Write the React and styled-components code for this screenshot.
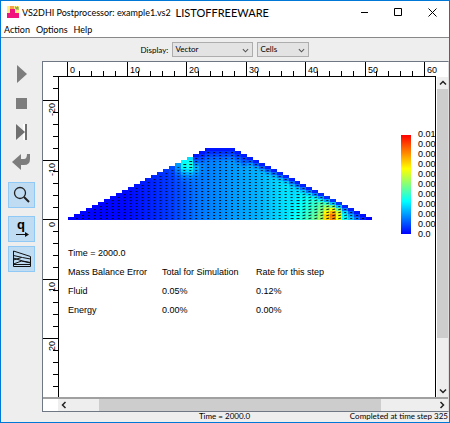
import React from 'react';
import styled, { createGlobalStyle } from 'styled-components';

const GlobalStyle = createGlobalStyle`
    * {
        box-sizing: border-box;
    }
    body {
        margin: 0;
        font-family: Lato, "Open Sans", sans-serif;
        font-size: 9px;
        color: #000;
    }
    button, select {
        font: inherit;
        color: inherit;
    }
`;

const Window = styled.div`
    display: flex;
    flex-direction: column;
    min-height: 100vh;
    border: 1px solid #0078d7;
    background: #eee;
`;

const TitleBar = styled.header`
    display: flex;
    align-items: center;
    height: 22px;
    padding-left: 5px;
    background: #fff;
`;

const Title = styled.h1`
    margin: 0 0 0 2px;
    font-size: 9px;
    font-weight: 400;
    white-space: nowrap;
`;

const Watermark = styled.span`
    margin-left: 5px;
    font-size: 11px;
`;

const WindowButtons = styled.div`
    display: flex;
    margin-left: auto;
`;

const WindowButton = styled.button`
    display: flex;
    align-items: center;
    justify-content: center;
    width: 34px;
    height: 20px;
    padding: 0;
    border: 0;
    background: none;
`;

const MenuBar = styled.nav`
    display: flex;
    gap: 6px;
    height: 15px;
    padding-left: 3px;
    background: #fff;
    border-bottom: 1px solid #888;
`;

const MenuButton = styled.button`
    padding: 0;
    border: 0;
    background: none;
    line-height: 14px;
`;

const Toolbar = styled.div`
    display: flex;
    align-items: center;
    justify-content: center;
    gap: 4px;
    height: 23px;
    font-size: 8px;
`;

const Field = styled.div`
    position: relative;
    width: ${props => props.$width}px;
    svg {
        position: absolute;
        right: 4px;
        top: 5px;
        pointer-events: none;
    }
`;

const Select = styled.select`
    display: block;
    width: 100%;
    height: 15px;
    padding: 0 2px;
    border: 1px solid #adadad;
    border-radius: 0;
    background: #e3e3e3;
    appearance: none;
    line-height: 13px;
`;

const Body = styled.div`
    display: flex;
    flex: 1;
`;

const Sidebar = styled.aside`
    width: 41px;
    display: flex;
    flex-direction: column;
    align-items: center;
    gap: 8px;
`;

const ToolGroup = styled.div`
    display: flex;
    flex-direction: column;
    gap: ${props => props.$gap}px;
`;

const ToolButton = styled.button`
    display: flex;
    align-items: center;
    justify-content: center;
    width: 27px;
    height: 26px;
    padding: 0;
    border: 1px solid ${props => (props.$active ? '#90c8f6' : 'transparent')};
    background: ${props => (props.$active ? '#c0dcf3' : 'none')};
`;

const Viewer = styled.main`
    flex: 1;
    min-width: 0;
    display: grid;
    grid-template-columns: 15px minmax(0, 1fr) 12px;
    grid-template-rows: 14px 1fr 14px;
    border: 1px solid #6f7684;
    border-right-color: #ddd;
    background: #fff;
`;

const TopRuler = styled.svg`
    grid-column: 2 / 4;
    width: 100%;
    height: 14px;
    font: 9px "Liberation Sans", Arial, sans-serif;
`;

const SideRuler = styled.svg`
    grid-column: 1;
    width: 15px;
    height: 100%;
    font: 9px "Liberation Sans", Arial, sans-serif;
`;

const Plot = styled.section`
    border: solid #000;
    border-width: 1px 1px 0;
    padding: 52px 0 0 9px;
    overflow: hidden;
    font: 9px "Liberation Sans", Arial, sans-serif;
`;

const Figure = styled.div`
    display: flex;
    justify-content: space-between;
    align-items: flex-start;
    height: 115px;
`;

const MeshImage = styled.svg`
    width: 304px;
    height: 72px;
    margin-top: 19px;
    flex: none;
`;

const Legend = styled.div`
    display: flex;
    align-items: center;
    gap: 7px;
`;

const ColorBar = styled.div`
    width: 10px;
    height: 99px;
    background: linear-gradient(#f00, #ff0 34%, #0ff 67%, #00f);
`;

const LegendLabels = styled.ul`
    width: 17px;
    margin: 0;
    padding: 0;
    list-style: none;
    line-height: 10px;
`;

const TimeLabel = styled.p`
    margin: 0;
    line-height: 19px;
`;

const BalanceTable = styled.table`
    border-collapse: collapse;
    line-height: 19px;
    th, td {
        min-width: 94px;
        padding: 0;
        font-weight: 400;
        text-align: left;
        white-space: nowrap;
    }
`;

const VerticalScroll = styled.div`
    display: flex;
    flex-direction: column;
    margin: 1px 0 0 1px;
    background: #eee;
`;

const HorizontalScroll = styled.div`
    grid-column: 2 / 4;
    display: flex;
    border-top: 2px solid #a0a0a0;
    background: #eee;
`;

const Corner = styled.div`
    border-top: 2px solid #a0a0a0;
`;

const Thumb = styled.div`
    flex: ${props => props.$size};
    background: #cdcdcd;
`;

const Track = styled.div`
    flex: ${props => props.$size};
`;

const ScrollButton = styled.button`
    display: flex;
    align-items: center;
    justify-content: center;
    flex: none;
    width: 12px;
    height: 12px;
    padding: 0;
    border: 0;
    background: none;
`;

const StatusBar = styled.footer`
    display: grid;
    grid-template-columns: 1fr auto 1fr;
    height: 10px;
    padding-right: 1px;
    font-size: 8px;
    line-height: 9px;
    white-space: nowrap;
    span:first-child {
        grid-column: 2;
    }
    span:last-child {
        text-align: right;
    }
`;

const COLUMNS = 51;
const SCALE = 59.5;

// [column, value] pairs of the velocity along the base of the embankment
const PROFILE = [
    [0, 0], [9, 0.01], [13, 0.04], [17, 0.08], [21, 0.15], [27, 0.2], [32, 0.24],
    [36, 0.3], [39, 0.38], [41, 0.46], [43, 0.57], [44, 0.62], [45, 0.6],
    [46, 0.34], [48, 0.18], [50, 0.02],
];

const rowsIn = col => Math.min(col + 1, 24, COLUMNS - col);

function baseValue(col) {
    const i = Math.max(1, PROFILE.findIndex(p => p[0] >= col));
    const [x0, v0] = PROFILE[i - 1];
    const [x1, v1] = PROFILE[i];
    return v0 + ((v1 - v0) * (col - x0)) / (x1 - x0);
}

function valueAt(col, row) {
    const depth = rowsIn(col) - row - 1;
    const bump = (x, y, r, a) => a * Math.exp(-((col - x) ** 2 + ((row - y) / 2) ** 2) / (r * r));
    let v = baseValue(col);
    if (col > 36) {
        v -= (v - 0.25) * Math.min(1, row / 16);
    }
    v += bump(19.5, 18, 1.6, 0.26) + bump(43.7, 1, 1.1, 0.26);
    if (col > 20) {
        v *= Math.min(1, 0.15 + depth * (col < 30 ? 0.2 : 0.35));
    }
    return Math.max(0, Math.min(1, v));
}

// blue - cyan - yellow - red
function colorOf(value) {
    const t = value * 3;
    const level = n => Math.round(255 * Math.max(0, Math.min(1, n)));
    return `rgb(${level(t - 1)}, ${level(Math.min(t, 3 - t))}, ${level(2 - t)})`;
}

const cells = [];
for (let col = 0; col < COLUMNS; col++) {
    for (let row = 0; row < rowsIn(col); row++) {
        cells.push({ col, row, value: valueAt(col, row) });
    }
}

const Mesh = () => (
    <MeshImage viewBox="0 0 51 12" preserveAspectRatio="none" role="img" aria-label="Vector">
        <g shapeRendering="crispEdges">
            {cells.map(c => (
                <rect
                    key={`${c.col}-${c.row}`}
                    x={c.col}
                    y={11.5 - c.row / 2}
                    width="1"
                    height="0.5"
                    fill={colorOf(c.value)}
                />
            ))}
        </g>
        {cells.filter(c => c.row < rowsIn(c.col) - 1).map(c => (
            <rect
                key={`${c.col}-${c.row}`}
                x={c.col + 0.34}
                y={11.67 - c.row / 2}
                width={c.value > 0.3 ? 0.5 : 0.34}
                height="0.17"
                opacity={c.col < 19 ? 0.7 : 0.85}
                transform={c.col > 38 && c.value > 0.3 ? `rotate(-12 ${c.col + 0.5} ${11.75 - c.row / 2})` : undefined}
            />
        ))}
    </MeshImage>
);

const ticks = (from, to) => {
    const list = [];
    for (let i = from; i <= to; i++) {
        list.push(i);
    }
    return list;
};

const HorizontalRuler = () => (
    <TopRuler>
        {ticks(0, 30).map(i => (
            <rect key={i} x={Math.round(9 + (i * SCALE) / 5)} y={i % 5 ? 9 : 0} width="1" height="14" />
        ))}
        {ticks(0, 6).map(i => (
            <text key={i} x={Math.round(12 + i * SCALE)} y="11">{i * 10}</text>
        ))}
    </TopRuler>
);

const VerticalRuler = () => (
    <SideRuler>
        {ticks(-12, 21).map(i => (
            <rect key={i} x={i % 5 ? 10 : 0} y={Math.round(143 + (i * SCALE) / 5)} width="15" height="1" />
        ))}
        {ticks(-2, 2).map(i => (
            <text
                key={i}
                textAnchor="end"
                transform={`translate(12 ${Math.round(146 + i * SCALE)}) rotate(-90)`}
            >
                {i * 10}
            </text>
        ))}
    </SideRuler>
);

const Chevron = ({ turn = 0, size = 8, weight = 1.5, color = '#222' }) => (
    <svg width={size} height={size} viewBox="0 0 8 8" fill="none" stroke={color} strokeWidth={weight}>
        <path d="M1 2.5 4 5.5 7 2.5" transform={`rotate(${turn} 4 4)`} />
    </svg>
);

const AppIcon = () => (
    <svg width="14" height="14" viewBox="0 0 14 14">
        <path d="M1 1h12v9H1z" fill="#ffee80" />
        <path d="M4 1h4v5H4z" fill="#f6a04c" />
        <path d="M4 4h5v4h4v5H1V8h3z" fill="#f0147c" />
        <path d="M9 2h1v2h1V2h1v3" fill="none" stroke="#7b9a42" />
    </svg>
);

const PlayIcon = () => (
    <svg width="10" height="18" viewBox="0 0 10 18">
        <path d="M0 0 10 9 0 18z" fill="#7d7d7d" />
    </svg>
);

const StopIcon = () => (
    <svg width="11" height="11" viewBox="0 0 11 11">
        <path d="M0 0h11v11H0z" fill="#7d7d7d" />
    </svg>
);

const StepIcon = () => (
    <svg width="12" height="16" viewBox="0 0 12 16">
        <path d="M8 0v16" stroke="#fff" strokeWidth="2" />
        <path d="M0 0 9 8 0 16zM9 0h2v16H9z" fill="#6f6f6f" />
    </svg>
);

const ReturnIcon = () => (
    <svg width="19" height="17" viewBox="0 0 19 17">
        <path d="M0 9 9 1v5h3q3 0 3-5h3v5q0 6-6 6H9v5z" fill="#7d7d7d" />
    </svg>
);

const ZoomIcon = () => (
    <svg width="18" height="18" viewBox="0 0 18 18" fill="none" stroke="#222">
        <circle cx="7" cy="7" r="5.5" strokeWidth="1.3" />
        <path d="m11 11 5 5" strokeWidth="2" />
    </svg>
);

const FluxIcon = () => (
    <svg width="18" height="24" viewBox="0 -2 18 24">
        <text x="4" y="10" fontFamily="Liberation Sans, sans-serif" fontSize="13" fontWeight="700">q</text>
        <path d="M3 15.5h12" stroke="#111" />
        <path d="m12 13 4 2.5-4 2.5z" fill="#111" />
    </svg>
);

const ContourIcon = () => (
    <svg width="20" height="18" viewBox="0 0 20 18" fill="none" stroke="#111">
        <path d="M1.5 1v15.5h17V6.5L1.5 1M1.5 5.5l9 2 8 1.5M1.5 10l8-2.5M1.5 8l9 3 8 1.5M1.5 14l8-3 9 2M1.5 14.5h17" />
    </svg>
);

const legendValues = ['0.01', ...Array(9).fill('0.00'), '0.0'];

export default function App() {
    return (
        <Window>
            <GlobalStyle />
            <TitleBar>
                <AppIcon />
                <Title>VS2DHI Postprocessor: example1.vs2</Title>
                <Watermark>LISTOFFREEWARE</Watermark>
                <WindowButtons>
                    <WindowButton aria-label="Minimize">
                        <svg width="9" height="9"><path d="M1 4.5h7" stroke="#000" /></svg>
                    </WindowButton>
                    <WindowButton aria-label="Maximize">
                        <svg width="9" height="9"><path d="M.5.5h7v7h-7z" fill="none" stroke="#000" /></svg>
                    </WindowButton>
                    <WindowButton aria-label="Close">
                        <svg width="9" height="9"><path d="m.5.5 8 8m0-8-8 8" stroke="#000" /></svg>
                    </WindowButton>
                </WindowButtons>
            </TitleBar>
            <MenuBar>
                <MenuButton>Action</MenuButton>
                <MenuButton>Options</MenuButton>
                <MenuButton>Help</MenuButton>
            </MenuBar>
            <Toolbar>
                <label htmlFor="display">Display:</label>
                <Field $width={81}>
                    <Select id="display"><option>Vector</option></Select>
                    <Chevron size={7} weight={1.2} color="#555" />
                </Field>
                <Field $width={52}>
                    <Select aria-label="Vector placement"><option>Cells</option></Select>
                    <Chevron size={7} weight={1.2} color="#555" />
                </Field>
            </Toolbar>
            <Body>
                <Sidebar>
                    <ToolGroup $gap={3}>
                        <ToolButton aria-label="Run"><PlayIcon /></ToolButton>
                        <ToolButton aria-label="Stop"><StopIcon /></ToolButton>
                        <ToolButton aria-label="Step"><StepIcon /></ToolButton>
                        <ToolButton aria-label="Restart"><ReturnIcon /></ToolButton>
                    </ToolGroup>
                    <ToolButton $active aria-label="Zoom"><ZoomIcon /></ToolButton>
                    <ToolGroup $gap={4}>
                        <ToolButton $active aria-label="Flux"><FluxIcon /></ToolButton>
                        <ToolButton $active aria-label="Contours"><ContourIcon /></ToolButton>
                    </ToolGroup>
                </Sidebar>
                <Viewer>
                    <div />
                    <HorizontalRuler />
                    <VerticalRuler />
                    <Plot>
                        <Figure>
                            <Mesh />
                            <Legend>
                                <ColorBar />
                                <LegendLabels>
                                    {legendValues.map((value, i) => <li key={i}>{value}</li>)}
                                </LegendLabels>
                            </Legend>
                        </Figure>
                        <TimeLabel>Time = 2000.0</TimeLabel>
                        <BalanceTable>
                            <thead>
                                <tr>
                                    <th>Mass Balance Error</th>
                                    <th>Total for Simulation</th>
                                    <th>Rate for this step</th>
                                </tr>
                            </thead>
                            <tbody>
                                <tr><td>Fluid</td><td>0.05%</td><td>0.12%</td></tr>
                                <tr><td>Energy</td><td>0.00%</td><td>0.00%</td></tr>
                            </tbody>
                        </BalanceTable>
                    </Plot>
                    <VerticalScroll>
                        <ScrollButton aria-label="Scroll up"><Chevron turn={180} /></ScrollButton>
                        <Thumb $size={84} />
                        <Track $size={16} />
                        <ScrollButton aria-label="Scroll down"><Chevron /></ScrollButton>
                    </VerticalScroll>
                    <Corner />
                    <HorizontalScroll>
                        <ScrollButton aria-label="Scroll left"><Chevron turn={90} /></ScrollButton>
                        <Track $size={8} />
                        <Thumb $size={77} />
                        <Track $size={15} />
                        <ScrollButton aria-label="Scroll right"><Chevron turn={-90} /></ScrollButton>
                    </HorizontalScroll>
                </Viewer>
            </Body>
            <StatusBar>
                <span>Time = 2000.0</span>
                <span>Completed at time step 325</span>
            </StatusBar>
        </Window>
    );
}
